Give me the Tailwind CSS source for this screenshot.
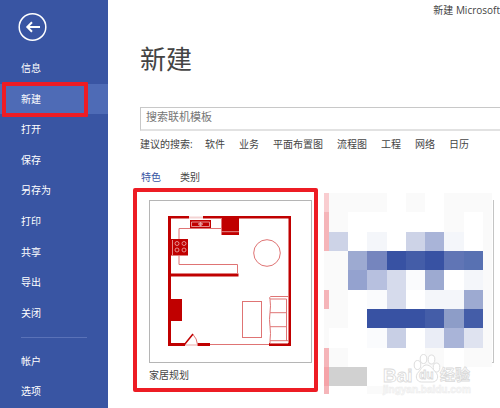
<!DOCTYPE html>
<html lang="zh-CN">
<head>
<meta charset="utf-8">
<meta name="viewport" content="width=device-width, initial-scale=1">
<title>新建 Microsoft</title>
<script src="https://cdn.jsdelivr.net/npm/@tailwindcss/browser@4"></script>
</head>
<body class="flex h-screen overflow-hidden bg-white font-['Open_Sans','Noto_Sans_CJK_SC',sans-serif] text-[10px] leading-4 text-[#444]">

<aside class="w-27 shrink-0 bg-[#3955a3] text-white">
  <button type="button" aria-label="返回" class="mt-3 ml-[18px] block size-[30px]">
    <svg viewBox="0 0 30 30" class="size-full" fill="none" stroke="#fff">
      <circle cx="14.5" cy="15" r="13.3" stroke-width="1.5"/>
      <path d="M22 15H9.5M14 10.3L9.3 15l4.7 4.7" stroke-width="2"/>
    </svg>
  </button>
  <nav>
    <ul class="mt-[11px] grid h-[275px] auto-rows-fr">
      <li class="flex"><a href="#" class="flex flex-1 items-center pl-[21px]">信息</a></li>
      <li class="relative flex bg-[#4e6bb6]">
        <a href="#" aria-current="page" class="flex flex-1 items-center pl-[21px]">新建</a>
        <span class="pointer-events-none absolute -top-[2px] -bottom-[3px] left-[2px] right-5 rounded-[1px] border-4 border-[#ed1c24]"></span>
      </li>
      <li class="flex"><a href="#" class="flex flex-1 items-center pl-[21px]">打开</a></li>
      <li class="flex"><a href="#" class="flex flex-1 items-center pl-[21px]">保存</a></li>
      <li class="flex"><a href="#" class="flex flex-1 items-center pl-[21px]">另存为</a></li>
      <li class="flex"><a href="#" class="flex flex-1 items-center pl-[21px]">打印</a></li>
      <li class="flex"><a href="#" class="flex flex-1 items-center pl-[21px]">共享</a></li>
      <li class="flex"><a href="#" class="flex flex-1 items-center pl-[21px]">导出</a></li>
      <li class="flex"><a href="#" class="flex flex-1 items-center pl-[21px]">关闭</a></li>
    </ul>
    <hr class="mx-[21px] mt-[9px] mb-2 border-[#5a72b8]">
    <ul class="grid auto-rows-[30px]">
      <li class="flex"><a href="#" class="flex flex-1 items-center pl-[21px]">帐户</a></li>
      <li class="flex"><a href="#" class="flex flex-1 items-center pl-[21px]">选项</a></li>
    </ul>
  </nav>
</aside>

<main class="min-w-0 flex-1 overflow-hidden pl-8">
  <header class="flex justify-end pt-[2px]"><p class="whitespace-nowrap">新建 Microsoft</p></header>
  <h1 class="mt-[25px] text-[26px] leading-8 font-normal">新建</h1>

  <input type="search" aria-label="搜索联机模板" placeholder="搜索联机模板" class="mt-8 block h-6 w-full border border-r-0 border-b-2 border-[#c8c8c8] border-b-[#e2e2e2] px-[5px] pb-1 text-[11px] outline-none placeholder:text-[#767676]">

  <div class="mt-[5px] flex whitespace-nowrap">
    <span class="w-[65px]">建议的搜索:</span>
    <nav aria-label="建议的搜索" class="flex gap-[14px]">
      <a href="#">软件</a><a href="#">业务</a><a href="#">平面布置图</a><a href="#">流程图</a><a href="#">工程</a><a href="#">网络</a><a href="#">日历</a>
    </nav>
  </div>

  <nav aria-label="模板" class="mt-[17px] flex gap-[19px] pl-[1px]">
    <a href="#" aria-current="true" class="text-[#3955a3]">特色</a>
    <a href="#">类别</a>
  </nav>

  <div class="flex items-start gap-3 pt-[15px] pl-[9px]">
    <a href="#" class="relative block w-[163px] shrink-0">
      <svg viewBox="149 200 163 163" class="block w-full" fill="none" stroke="#c00000">
        <rect x="149.500" y="200.500" width="162" height="162" stroke="#b5b5b5"/>
        <g fill="#c00000" stroke="none">
          <path d="M168 216h21v2.500h-18v124.500h14v3h-17zM203 216h88v130h-22v-3h19.500V218.500H203zM197.500 343H210v3h-12.500z"/>
          <path d="M171 273.500h67.500v3H171zM221.500 218H239v17h-17.500zM171 239h17v16.500h-17zM171 299h11v22h-11zM190 220h21v8h-21z"/>
        </g>
        <path d="M189 217.500h14M185 345h12" stroke="#f3d3d3" stroke-width="2"/>
        <g stroke="#df7474" stroke-width="1">
          <path d="M221.500 218v10.500H179V239M179 255.500v9h58.500v9M210 344.500h59"/>
          <circle cx="267" cy="253" r="13.300"/>
          <rect x="242.500" y="301.500" width="19" height="36"/>
          <path d="M288.500 296.500h-18q-1.500 1-.5 3q1 6 0 13q-1 7 0 14q1 7 0 14v3h18M270 299h16.500v42M270 312.700h16.500M270 326.700h16.500M270 340.700h18"/>
          <path d="M193 334.500q4 4 4.500 10"/>
        </g>
        <path d="M184.500 344.500l8.500-10.500" stroke-width="1.500"/>
        <g stroke="#eeb0b0" stroke-width=".8">
          <path d="M221.500 231.700H239M191.500 222h18v4.500h-18zM198 224h5M200.500 222v4M172.500 240v15"/>
          <circle cx="200.500" cy="224.200" r="1.500"/>
          <circle cx="177" cy="243.500" r="2"/><circle cx="184" cy="243.500" r="2"/>
          <circle cx="177" cy="250" r="2"/><circle cx="184" cy="250" r="2"/>
        </g>
      </svg>
      <span class="mt-1 block">家居规划</span>
      <span class="pointer-events-none absolute -top-3 -right-[6px] -bottom-[9px] -left-4 rounded-[2px] border-4 border-[#ed1c24]"></span>
    </a>

    <!-- Pixelated second template with watermark -->
    <svg viewBox="324 193 172 215" class="-mt-[7px] block h-[215px] w-[172px] shrink-0" role="img" aria-label="模板">
      <g shape-rendering="crispEdges">
        <path fill="#fafafa" d="M329 193h58v19h-58zM406 193h19v19h-19zM444 193h48v19h-48zM329 212h19v20h-19zM444 212h20v20h-20zM483 212h9v155h-9zM324 251h24v39h-24zM329 290h19v19h-19zM324 309h24v19h-24zM324 328h5v20h-5zM329 348h19v19h-19zM425 348h19v19h-19zM464 348h19v19h-19zM367 386h20v8h-20z"/>
        <path fill="#f9cdd0" d="M324 193h5v19h-5z"/>
        <path fill="#f5b5b9" d="M324 212h5v39h-5zM324 290h5v19h-5zM324 348h5v46h-5z"/>
        <path fill="#f5a3a8" d="M324 367h5v19h-5z"/>
        <path fill="#cdd3e7" d="M329 232h19v19h-19zM406 232h19v19h-19z"/>
        <path fill="#f4f6fa" d="M367 232h20v19h-20zM444 232h20v19h-20zM464 270h19v20h-19zM425 290h39v19h-39z"/>
        <path fill="#a9b4d8" d="M425 232h19v19h-19zM444 328h20v20h-20z"/>
        <path fill="#9daad1" d="M348 251h19v19h-19zM425 270h19v20h-19zM464 290h19v19h-19z"/>
        <path fill="#7585be" d="M367 251h20v19h-20z"/>
        <path fill="#3852a3" d="M387 251h57v19h-57zM367 309h58v19h-58z"/>
        <path fill="#445da8" d="M406 251h19v19h-19zM425 309h19v19h-19zM464 309h19v19h-19z"/>
        <path fill="#6075b5" d="M444 251h20v19h-20z"/>
        <path fill="#5871b2" d="M464 251h19v19h-19z"/>
        <path fill="#94a2cf" d="M348 270h19v20h-19z"/>
        <path fill="#b7c0df" d="M367 270h20v20h-20z"/>
        <path fill="#d6dbec" d="M387 270h19v39h-19z"/>
        <path fill="#fafbfd" d="M406 270h19v20h-19zM367 290h20v19h-20zM367 328h20v20h-20z"/>
        <path fill="#8d9dc8" d="M444 309h20v19h-20z"/>
        <path fill="#c8cfe5" d="M387 328h19v20h-19z"/>
        <path fill="#eaedf6" d="M425 328h19v20h-19z"/>
        <path fill="#dfe3f0" d="M464 328h19v20h-19z"/>
        <path fill="#d1d1d1" d="M329 367h38v19h-38z"/>
        <path fill="#c4c4c4" d="M493 200h1v163h-1zM492 362h2v1h-2z"/>
      </g>
      <g fill="#fff" stroke="#dedede" stroke-width="1">
        <ellipse cx="417.500" cy="365" rx="3.300" ry="4.500"/>
        <ellipse cx="423.500" cy="359" rx="3.300" ry="4.500"/>
        <ellipse cx="431.500" cy="359.500" rx="3.300" ry="4.500"/>
        <ellipse cx="436.500" cy="367.500" rx="3.300" ry="4.500"/>
        <path d="M426.500 365c-4 0-5 4-8 7c-4 4-2 10 3 10h11c5 0 7-6 3-10c-3-3-5-7-9-7z"/>
      </g>
      <g class="font-['Liberation_Sans','Noto_Sans_CJK_SC',sans-serif] font-bold" fill="#fff" stroke="#dadada" stroke-width=".8">
        <text x="383" y="382" font-size="19">Bai</text>
        <text x="419" y="379" font-size="12">du</text>
        <text x="440" y="380" font-size="15">经验</text>
        <text x="383" y="393" font-size="10" fill="#f8f8f8" stroke="#ececec" stroke-width=".5">jingyan.baidu.com</text>
      </g>
    </svg>
  </div>
</main>
</body>
</html>
